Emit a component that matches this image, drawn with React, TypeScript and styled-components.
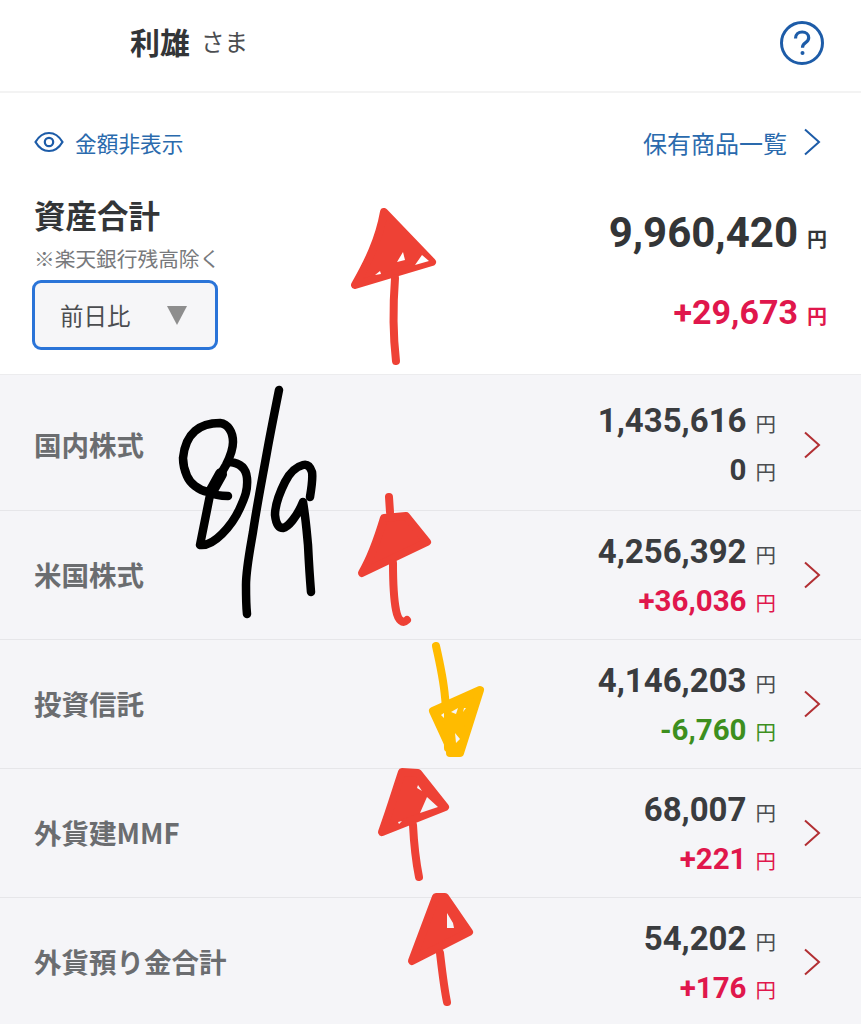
import React from 'react';
import styled, { createGlobalStyle } from 'styled-components';

const holdings = [
    { name: '国内株式', amount: '1,435,616', change: '0', tone: 'flat' },
    { name: '米国株式', amount: '4,256,392', change: '+36,036', tone: 'up' },
    { name: '投資信託', amount: '4,146,203', change: '-6,760', tone: 'down' },
    { name: '外貨建MMF', amount: '68,007', change: '+221', tone: 'up' },
    { name: '外貨預り金合計', amount: '54,202', change: '+176', tone: 'up' },
];

const toneColors = { flat: '#3a3c3f', up: '#e0174c', down: '#3d8f1e' };

export default function App() {
    return <Page>
        <GlobalStyle />
        <Header>
            <UserName>利雄</UserName>
            <Honorific>さま</Honorific>
            <HelpIcon />
        </Header>
        <Summary>
            <SummaryLeft>
                <HideAmounts><EyeIcon />金額非表示</HideAmounts>
                <Title>資産合計</Title>
                <Note>※楽天銀行残高除く</Note>
                <Select>前日比<SelectArrow /></Select>
            </SummaryLeft>
            <SummaryRight>
                <ListLink>保有商品一覧<Chevron color="#1d5ca8" /></ListLink>
                <Total>9,960,420<TotalUnit>円</TotalUnit></Total>
                <TotalChange>+29,673<TotalUnit>円</TotalUnit></TotalChange>
            </SummaryRight>
        </Summary>
        <List>
            {holdings.map(holding => <Row key={holding.name}>
                <RowName>{holding.name}</RowName>
                <RowValues>
                    <Amount>{holding.amount}<Unit>円</Unit></Amount>
                    <Change $color={toneColors[holding.tone]}>
                        {holding.change}<Unit $color={holding.tone === 'flat' ? undefined : toneColors[holding.tone]}>円</Unit>
                    </Change>
                </RowValues>
                <Chevron color="#b22f33" />
            </Row>)}
        </List>
        <Scribbles />
    </Page>;
}

const HelpIcon = () => <HelpSvg viewBox="0 0 44 44" fill="none" stroke="#1d5ca8" strokeWidth="3">
    <circle cx="22" cy="22" r="20.5" />
    <path d="M15.500 17.500c0-4 3-6.500 6.700-6.500 3.800 0 6.500 2.400 6.500 5.700 0 2.600-1.500 3.900-3.400 5.200-1.900 1.300-2.800 2.400-2.800 4.800" strokeWidth="3.200" />
    <circle cx="22.500" cy="32" r="2" fill="#1d5ca8" stroke="none" />
</HelpSvg>;

const EyeIcon = () => <EyeSvg viewBox="0 0 30 22" fill="none" stroke="#1d5ca8" strokeWidth="2.200">
    <path d="M1.500 11C5 5 9.500 2 15 2s10 3 13.500 9C25 17 20.500 20 15 20S5 17 1.500 11z" />
    <circle cx="15" cy="11" r="4.200" />
</EyeSvg>;

const Chevron = ({ color }: { color: string }) => <ChevronSvg viewBox="0 0 18 28" fill="none" stroke={color} strokeWidth="2">
    <path d="M2 1.500 16 14 2 26.500" />
</ChevronSvg>;

// Hand-drawn marks lying over the screenshot
const Scribbles = () => <ScribbleSvg viewBox="0 0 861 1024" fill="none" strokeLinecap="round" strokeLinejoin="round">
    <g stroke="#ee4135" fill="#ee4135" strokeWidth="8">
        <path d="M384 212 432 262 355 285C368 262 379 240 384 212z" />
        <path d="M395 278C393 305 393 335 396 361" fill="none" />
        <path d="M389 497 390 512" fill="none" />
        <path d="M384 518 406 516 427 542 362 573C372 556 378 538 384 518z" />
        <path d="M393 563C393 585 394 600 396 610 398 621 403 624 407 620" fill="none" />
        <path d="M402 772 418 773 445 807 382 832C390 810 396 790 402 772z" />
        <path d="M413 825C414 845 416 862 419 877" fill="none" />
        <path d="M436 897 445 897 469 932 412 961C420 940 428 918 436 897z" />
        <path d="M440 953C442 970 444 988 447 1002" fill="none" />
    </g>
    <Holes $color="#fff" d="M397 262 403 252 405 260zM415 265 422 255 429 261zM375 275 380 271 381 274z" />
    <Holes $color="#f5f5f8" d="M418 785 422 791 417 788zM427 797 438 807 420 813zM398 822 402 821 399 824zM447 913 453 923 454 928 447 928z" />
    <g stroke="#ffbb00" fill="#ffbb00" strokeWidth="8">
        <path d="M436 646C441 668 444 685 445 697 447 715 448 735 448 748" fill="none" />
        <path d="M480 690 433 711 450 748 450 753 460 753 480 690z" />
    </g>
    <Holes $color="#f5f5f8" d="M451 712 458 708 456 714zM441 715 444 713 444 718zM455 733 460 739 456 743zM464 708 466 708 463 712z" />
    <g stroke="#000" strokeWidth="8.500">
        <path d="M228 496C220 496 212 494 208 492 198 490 190 483 187 476 183 467 183 462 183 458 184 448 188 437 195 431 203 424 213 423 220 423 228 424 233 432 233 442 233 450 230 457 226 465 220 475 215 484 210 495L200 545C208 546 215 541 222 534 230 526 236 517 240 508 245 497 248 490 247 478 246 468 240 463 230 462" />
        <path d="M221 474 211 492" strokeWidth="12" />
        <path d="M279 390C274 415 270 435 267 452 262 480 257 505 253 532 249 555 246 570 246 585 246 595 246 605 247 614" />
        <path d="M310 497C312 485 313 478 312 472 310 466 307 464 303 465 295 467 289 474 285 482 280 492 275 505 275 515 276 524 279 528 283 528 288 527 297 517 303 502 306 520 307 535 308 545 309 565 310 580 311 592" />
    </g>
</ScribbleSvg>;

const GlobalStyle = createGlobalStyle`
    body {
        margin: 0;
        background: #f5f5f8;
        font-family: "Noto Sans CJK JP", "Noto Sans", sans-serif;
    }
`;

const Page = styled.div`
    position: relative;
    width: 861px;
    height: 1024px;
    overflow: hidden;
    background: #f5f5f8;
`;

const Header = styled.header`
    display: flex;
    align-items: center;
    height: 93px;
    padding: 0 37px 6px 130px;
    box-sizing: border-box;
    background: #fff;
    border-bottom: 2px solid #f3f3f3;
`;

const UserName = styled.span`
    margin-right: 11px;
    margin-bottom: 3px;
    font-size: 30px;
    font-weight: 700;
    color: #333537;
`;

const Honorific = styled.span`
    margin-bottom: 3px;
    font-size: 23.500px;
    color: #4b4d50;
`;

const HelpSvg = styled.svg`
    width: 44px;
    height: 44px;
    margin-left: auto;
`;

const Summary = styled.section`
    display: flex;
    justify-content: space-between;
    height: 282px;
    padding: 0 34px;
    box-sizing: border-box;
    background: #fff;
    border-bottom: 1px solid #ececee;
`;

const SummaryLeft = styled.div`
    display: flex;
    flex-direction: column;
    align-items: flex-start;
`;

const SummaryRight = styled.div`
    display: flex;
    flex-direction: column;
    align-items: flex-end;
`;

const HideAmounts = styled.div`
    display: flex;
    align-items: center;
    gap: 11px;
    height: 32px;
    margin-top: 33px;
    font-size: 21.700px;
    color: #2a6aad;
`;

const EyeSvg = styled.svg`
    width: 30px;
    height: 22px;
`;

const Title = styled.h1`
    margin: 33px 0 0;
    font-size: 31.500px;
    line-height: 46px;
    font-weight: 700;
    color: #333537;
`;

const Note = styled.div`
    margin-top: 6px;
    font-size: 20.700px;
    line-height: 30px;
    color: #77797c;
`;

const Select = styled.div`
    display: flex;
    align-items: center;
    justify-content: space-between;
    width: 186px;
    height: 70px;
    margin-top: 7px;
    margin-left: -2px;
    padding: 0 28px 0 25px;
    box-sizing: border-box;
    border: 3px solid #2a74d8;
    border-radius: 9px;
    background: #f6f6f8;
    font-size: 23.500px;
    color: #4b4d50;
`;

const SelectArrow = styled.span`
    width: 0;
    height: 0;
    border-left: 10px solid transparent;
    border-right: 10px solid transparent;
    border-top: 19px solid #8e8e8e;
`;

const ListLink = styled.div`
    display: flex;
    align-items: center;
    gap: 16px;
    height: 32px;
    margin-top: 33px;
    margin-right: 6px;
    font-size: 24px;
    color: #2a6aad;
`;

const ChevronSvg = styled.svg`
    width: 18px;
    height: 28px;
    flex: none;
`;

const Total = styled.div`
    display: flex;
    align-items: baseline;
    margin-top: 47px;
    font-family: Roboto, sans-serif;
    font-size: 42px;
    line-height: 56px;
    font-weight: 700;
    color: #333537;
`;

const TotalUnit = styled.span`
    margin-left: 9px;
    font-family: "Noto Sans CJK JP", sans-serif;
    font-size: 20px;
    font-weight: 700;
`;

const TotalChange = styled(Total)`
    margin-top: 25px;
    font-size: 34px;
    line-height: 40px;
    color: #e0174c;
`;

const List = styled.div`
    display: flex;
    flex-direction: column;
`;

const Row = styled.div`
    display: flex;
    align-items: center;
    height: 129px;
    padding: 0 40px 0 34px;
    box-sizing: border-box;
    border-bottom: 1px solid #e6e6e9;

    &:first-child {
        height: 136px;
        padding-top: 4px;
    }
`;

const RowName = styled.div`
    margin-bottom: 2px;
    font-size: 27.500px;
    font-weight: 700;
    color: #6b6d70;
`;

const RowValues = styled.div`
    display: flex;
    flex-direction: column;
    align-items: flex-end;
    gap: 7px;
    margin-left: auto;
    margin-right: 27px;
    padding-top: 3px;
`;

const Amount = styled.div`
    display: flex;
    align-items: baseline;
    font-family: Roboto, sans-serif;
    font-size: 33px;
    line-height: 40px;
    font-weight: 700;
    color: #3a3c3f;
`;

const Change = styled(Amount)<{ $color: string }>`
    font-size: 29.500px;
    color: ${({ $color }) => $color};
`;

const Unit = styled.span<{ $color?: string }>`
    margin-left: 9px;
    font-family: "Noto Sans CJK JP", sans-serif;
    font-size: 20.500px;
    font-weight: 400;
    color: ${({ $color }) => $color ?? '#4b4d50'};
`;

const ScribbleSvg = styled.svg`
    position: absolute;
    top: 0;
    left: 0;
    width: 861px;
    height: 1024px;
    pointer-events: none;
`;

const Holes = styled.path<{ $color: string }>`
    fill: ${({ $color }) => $color};
    stroke: none;
`;
